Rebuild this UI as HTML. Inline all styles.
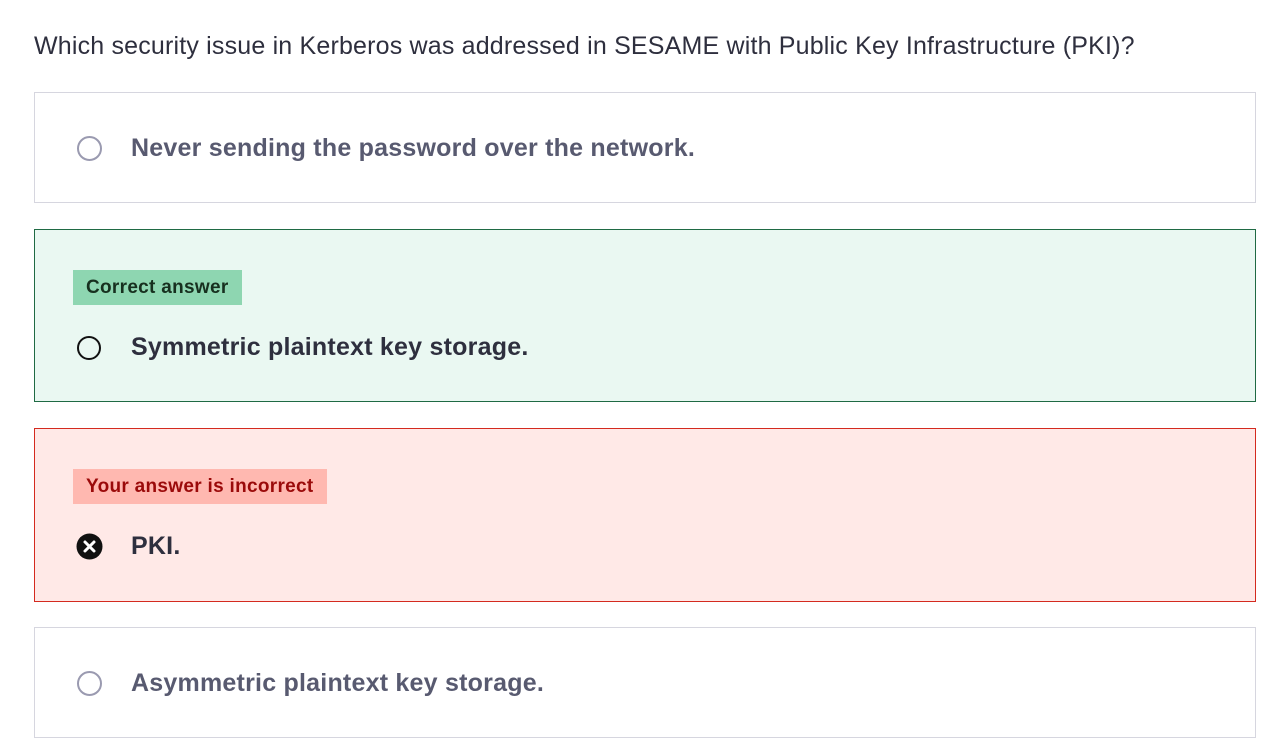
<!DOCTYPE html>
<html><head><style>
body{margin:0;background:#fff;font-family:"Liberation Sans",Arial,sans-serif;width:1287px;height:755px;overflow:hidden;position:relative}
.q{position:absolute;left:34px;top:32px;font-size:25px;color:#2e2f3e;letter-spacing:0.18px}
.box{position:absolute;left:34px;width:1220px;border:1px solid #d6d6df;background:#fff}
.opt{position:absolute;left:96px;font-size:25px;font-weight:bold;color:#585a70;letter-spacing:0.22px}
.rad{position:absolute;left:42px;width:21px;height:21px;border:2px solid #9a9ab0;border-radius:50%}
.badge{position:absolute;left:38px;height:35px;line-height:35px;padding:0 13px;font-size:19px;font-weight:bold;letter-spacing:0.3px}
</style></head><body>
<div class="q">Which security issue in Kerberos was addressed in SESAME with Public Key Infrastructure (PKI)?</div>

<div class="box" style="top:92px;height:109px">
 <div class="rad" style="top:43px"></div>
 <div class="opt" style="top:41px">Never sending the password over the network.</div>
</div>

<div class="box" style="top:229px;height:171px;background:#eaf8f2;border-color:#1f6a44">
 <div class="badge" style="top:40px;background:#8ed6b1;color:#17301f">Correct answer</div>
 <div class="rad" style="top:106px;border-color:#111;border-width:2.5px;width:20px;height:20px"></div>
 <div class="opt" style="top:103px;color:#2e2f3e">Symmetric plaintext key storage.</div>
</div>

<div class="box" style="top:428px;height:172px;background:#ffe9e7;border-color:#d42a1f">
 <div class="badge" style="top:40px;background:#ffb8b0;color:#9b0a0a">Your answer is incorrect</div>
 <svg style="position:absolute;left:41px;top:104px" width="27" height="27" viewBox="0 0 27 27"><circle cx="13.5" cy="13.5" r="13" fill="#111"/><path d="M9 9L18 18M18 9L9 18" stroke="#fff" stroke-width="3" stroke-linecap="round"/></svg>
 <div class="opt" style="top:103px;color:#2e2f3e">PKI.</div>
</div>

<div class="box" style="top:627px;height:109px">
 <div class="rad" style="top:43px"></div>
 <div class="opt" style="top:41px">Asymmetric plaintext key storage.</div>
</div>
</body></html>
